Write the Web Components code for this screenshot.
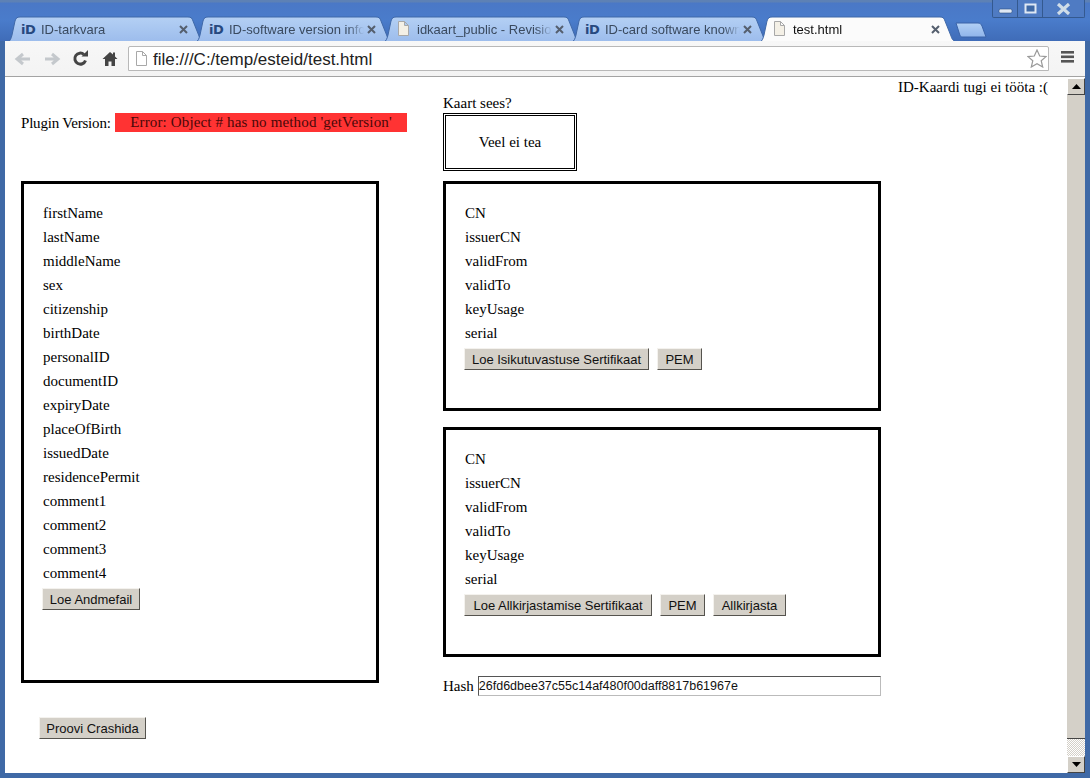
<!DOCTYPE html>
<html><head><meta charset="utf-8">
<style>
html,body{margin:0;padding:0;height:100%;overflow:hidden}
body{font-family:"Liberation Serif",serif;color:#000}
</style></head>
<body>
<template id="t-window"><style>
:host{display:flex;flex-direction:column;width:1090px;height:778px;box-sizing:border-box;background:#3f69a6;padding:0 5px 5px;position:relative}
.strip{height:41px;margin:0 -5px;flex:none;background:linear-gradient(#5d81b5 0,#5d81b5 2px,#4a78c6 3px,#4a7ccb 20px,#3f6cb8 41px);display:flex;justify-content:space-between;align-items:flex-start;position:relative;overflow:hidden}
.tabs{display:flex;padding:16px 0 0 8px;height:25px}
.nt{margin:6px 0 0 7px;flex:none}
.ctl{display:flex;margin-right:5px;border:1px solid #34598f;border-top:0;height:17px;border-radius:0 0 2px 2px;background:#4f7bc3}
.ctl span{display:flex;align-items:center;justify-content:center;height:17px}
.ctl span+span{border-left:1px solid #34598f}
</style>
<div class="strip"><div class="tabs"><slot name="tabs"></slot><svg class="nt" width="32" height="16" viewBox="0 0 32 16"><defs><linearGradient id="g" x1="0" y1="0" x2="0" y2="1"><stop offset="0" stop-color="#b2d0f5"/><stop offset="1" stop-color="#8fb4ea"/></linearGradient></defs><path d="M1 1H23C25 1 26 2 27 4L31 15H7C6 15 5 14 4.500 12Z" fill="url(#g)" stroke="#3a63a8"/></svg></div>
<div class="ctl"><span style="width:24px"><svg width="15" height="10"><rect x="1" y="5" width="13" height="4" rx="1.500" fill="#dfe8f4" stroke="#2d4f80" stroke-width=".6"/></svg></span><span style="width:24px"><svg width="13" height="11"><rect x="1.500" y="1.500" width="10" height="8" fill="#3f69a6" stroke="#dfe8f4" stroke-width="2"/></svg></span><span style="width:41px"><svg width="15" height="12"><path d="M2 1l11 10M13 1L2 11" stroke="#d0dde8" stroke-width="3.200"/></svg></span></div></div>
<slot name="toolbar"></slot>
<div style="flex:1;display:flex;min-height:0"><slot></slot></div>
</template>

<template id="t-tab"><style>
:host{display:block;width:196px;height:25px;margin-right:-8px;position:relative;font:13px "Liberation Sans",sans-serif;color:#3a4a5f}
svg.bg{position:absolute;inset:0}
:host([active]) {color:#111;z-index:2}
.in{position:relative;display:flex;align-items:center;height:25px;padding:2px 16px 0 13px;box-sizing:border-box}
.t{flex:1;overflow:hidden;white-space:nowrap;margin-left:4px;-webkit-mask-image:linear-gradient(to right,#000 calc(100% - 16px),transparent);mask-image:linear-gradient(to right,#000 calc(100% - 16px),transparent);padding-right:4px}
.ic{font:bold 13px "DejaVu Sans",sans-serif;color:#27497f;width:16px;letter-spacing:-.5px;flex:none}
.x{width:9px;height:9px;flex:none;margin-left:3px}
</style>
<svg class="bg" width="196" height="25" viewBox="0 0 196 25"><defs><linearGradient id="tg" x1="0" y1="0" x2="0" y2="1"><stop offset="0" stop-color="#b4d0f4"/><stop offset="1" stop-color="#9cbcec"/></linearGradient></defs><path id="p" d="M0 26C2 25 3 23 4 19L7 5C8 2 9 1 12 1H180C183 1 184 2 185 5L191 20C192 24 194 25 196 26Z" fill="url(#tg)" stroke="#3f68a8"/></svg>
<div class="in"><span class="ic" id="ic"></span><span class="t"><slot></slot></span><svg class="x" viewBox="0 0 9 9"><path d="M1 1l7 7M8 1L1 8" stroke="#555f6e" stroke-width="2"/></svg></div>
</template>

<template id="t-toolbar"><style>
:host{display:flex;align-items:flex-start;height:36px;box-sizing:border-box;flex:none;background:linear-gradient(#f7f7f7 0,#f3f3f3 100%);border-bottom:1px solid #a3a3a3;padding:5px 0 0 3px;position:relative;font:17px "Liberation Sans",sans-serif}
.b{width:29px;height:25px;display:flex;align-items:center;justify-content:center;flex:none}
.o{width:921px;height:25px;box-sizing:border-box;border:1px solid #b8b8b8;border-radius:2px 2px 0 0;background:#fff;display:flex;align-items:center;padding:0 1px 0 6px;margin-left:4px;color:#222;flex:none}
.o span{flex:1;margin-left:6px;position:relative;top:1px}
.m{flex:1;display:flex;justify-content:center;margin-top:5px}
</style>
<div class="b"><svg width="18" height="14" viewBox="0 0 18 14"><path d="M16 7H4M9 2L3 7l6 5" fill="none" stroke="#c4c8cc" stroke-width="3"/></svg></div>
<div class="b"><svg width="18" height="14" viewBox="0 0 18 14"><path d="M2 7h12M9 2l6 5-6 5" fill="none" stroke="#c4c8cc" stroke-width="3"/></svg></div>
<div class="b"><svg width="17" height="17" viewBox="0 0 17 17"><path d="M13.500 10.500A5.500 5.500 0 1 1 12 4.500" fill="none" stroke="#444" stroke-width="3"/><path d="M9.500 6.500H16V0Z" fill="#444"/></svg></div>
<div class="b"><svg width="16" height="15" viewBox="0 0 16 15"><path d="M8 1L0.500 8H3v7h3.500v-4.500h3V15H13V8h2.500L13 5.500V1.500h-2v2Z" fill="#444"/></svg></div>
<div class="o"><svg width="12" height="15" viewBox="0 0 12 15"><path d="M1.500 .5h6l4 4v10h-10ZM7.500 .5v4h4" fill="#fff" stroke="#a8a8a8"/></svg><span>file:///C:/temp/esteid/test.html</span><svg width="20" height="19" viewBox="0 0 20 19"><path d="M10 1l2.700 6 6.300.6-4.800 4.100 1.500 6.300L10 14.700 4.300 18l1.500-6.300L1 7.600 7.300 7Z" fill="#fff" stroke="#9a9a9a" stroke-width="1.200"/></svg></div>
<div class="m"><svg width="13" height="12"><rect width="13" height="2.600" y="0" fill="#555"/><rect width="13" height="2.600" y="4.500" fill="#555"/><rect width="13" height="2.600" y="9" fill="#555"/></svg></div>
</template>

<template id="t-page"><style>
:host{display:flex;flex:1;min-width:0;background:#fff;font:15px "Liberation Serif",serif;line-height:18px}
.v{flex:1;min-width:0;display:flex;flex-direction:column}
.top{text-align:right;padding:1px 19px 0 0;height:17px;flex:none}
.cols{display:flex;padding-left:16px}
.l{width:422px;flex:none}
.hl{height:86px;display:flex;align-items:flex-start;padding-top:18px;box-sizing:border-box}
.lab{width:94px;flex:none;padding-top:1px;letter-spacing:-.2px}
.err{width:292px;height:19px;background:#ff3333;text-align:center;color:#4a0808;font-size:15px;letter-spacing:.15px;line-height:19px}
.r{width:438px;flex:none}
.hr{height:86px}
.ks{height:18px;line-height:16px}
.st{width:134px;height:58px;box-sizing:border-box;border:3px double #000;display:flex;align-items:center;justify-content:center}
.crash{margin:34px 0 0 18px}
.hash{display:flex;align-items:center;gap:4px;margin-top:19px;height:20px}
.hash div{flex:1;height:20px;box-sizing:border-box;border:1px solid;border-color:#555 #bbb #bbb #555;font:12.500px "Liberation Sans",sans-serif;line-height:18px;padding-left:0;white-space:nowrap;color:#111}
.sp{height:16px}
.sb{width:18px;flex:none;display:flex;flex-direction:column;padding-top:1px;background:#fff}
.ab{height:17px;background:#d4d0c8;box-sizing:border-box;border:1px solid;border-color:#fff #444 #444 #fff;display:flex;align-items:center;justify-content:center;flex:none}
.th{height:644px;flex:none;background:#d4d0c8;border-bottom:1px solid #444;box-sizing:border-box}
.tr{flex:1;background:repeating-conic-gradient(#d4d0c8 0 25%,#fff 0 50%) 0 0/2px 2px}
</style>
<div class="v"><div class="top">ID-Kaardi tugi ei tööta :(</div>
<div class="cols">
<div class="l"><div class="hl"><span class="lab">Plugin Version:</span><div class="err">Error: Object # has no method 'getVersion'</div></div>
<slot name="person"></slot>
<div class="crash"><slot name="crash"></slot></div></div>
<div class="r"><div class="hr"><div class="ks">Kaart sees?</div><div class="st">Veel ei tea</div></div>
<slot name="c1"></slot><div class="sp"></div><slot name="c2"></slot>
<div class="hash">Hash <div>26fd6dbee37c55c14af480f00daff8817b61967e</div></div></div>
</div></div>
<div class="sb"><div class="ab"><svg width="9" height="5"><path d="M4.500 0L9 5H0Z"/></svg></div><div class="th"></div><div class="tr"></div><div class="ab"><svg width="9" height="5"><path d="M0 0H9L4.500 5Z"/></svg></div></div>
</template>

<template id="t-box"><style>
:host{display:block;box-sizing:border-box;border:3px solid #000;padding:17px 19px 0;height:var(--h,230px);line-height:24px}
.f{display:flex;flex-direction:column}
.bt{display:flex;gap:8px;margin-top:3px;margin-left:-1px}
</style>
<div class="f" id="f"></div><div class="bt"><slot></slot></div>
</template>

<template id="t-btn"><style>
:host{display:inline-flex;align-items:center;justify-content:center;box-sizing:border-box;height:22px;background:#d4d0c8;font:13px "Liberation Sans",sans-serif;color:#111;border:1px solid;border-color:#f4f2ee #55534e #55534e #f4f2ee;white-space:nowrap;line-height:1}
</style><slot></slot></template>

<script>
const mk=(n,id,init)=>customElements.define(n,class extends HTMLElement{constructor(){super();const s=this.attachShadow({mode:'open'});s.appendChild(document.getElementById(id).content.cloneNode(true));}connectedCallback(){init&&init.call(this,this.shadowRoot);}});
mk('x-window','t-window');
mk('x-toolbar','t-toolbar');
mk('x-page','t-page');
mk('x-btn','t-btn');
mk('x-tab','t-tab',function(s){
  const ic=this.getAttribute('icon');const i=s.getElementById('ic');
  if(ic==='id')i.textContent='iD';
  else i.innerHTML='<svg width="13" height="15" viewBox="0 0 13 15"><path d="M1.500 .5h6l4 4v10h-10ZM7.500 .5v4h4" fill="#f4f0e6" stroke="#a8a8a8"/></svg>';
  if(this.hasAttribute('active')){const p=s.getElementById('p');p.setAttribute('fill','#fbfbfb');}
});
mk('x-box','t-box',function(s){
  const f=s.getElementById('f');
  for(const t of this.getAttribute('fields').split(',')){const d=document.createElement('div');d.textContent=t;f.appendChild(d);}
});
</script>
<x-window>
<x-tab slot="tabs" icon="id">ID-tarkvara</x-tab>
<x-tab slot="tabs" icon="id">ID-software version info</x-tab>
<x-tab slot="tabs" icon="page">idkaart_public - Revision</x-tab>
<x-tab slot="tabs" icon="id">ID-card software known</x-tab>
<x-tab slot="tabs" icon="page" active>test.html</x-tab>
<x-toolbar slot="toolbar"></x-toolbar>
<x-page>
<x-box slot="person" style="--h:502px;width:358px" fields="firstName,lastName,middleName,sex,citizenship,birthDate,personalID,documentID,expiryDate,placeOfBirth,issuedDate,residencePermit,comment1,comment2,comment3,comment4"><x-btn style="width:98px">Loe Andmefail</x-btn></x-box>
<x-btn slot="crash" style="width:107px">Proovi Crashida</x-btn>
<x-box slot="c1" fields="CN,issuerCN,validFrom,validTo,keyUsage,serial"><x-btn style="width:185px">Loe Isikutuvastuse Sertifikaat</x-btn><x-btn style="width:45px">PEM</x-btn></x-box>
<x-box slot="c2" fields="CN,issuerCN,validFrom,validTo,keyUsage,serial"><x-btn style="width:188px">Loe Allkirjastamise Sertifikaat</x-btn><x-btn style="width:45px">PEM</x-btn><x-btn style="width:73px">Allkirjasta</x-btn></x-box>
</x-page>
</x-window>
</body></html>
